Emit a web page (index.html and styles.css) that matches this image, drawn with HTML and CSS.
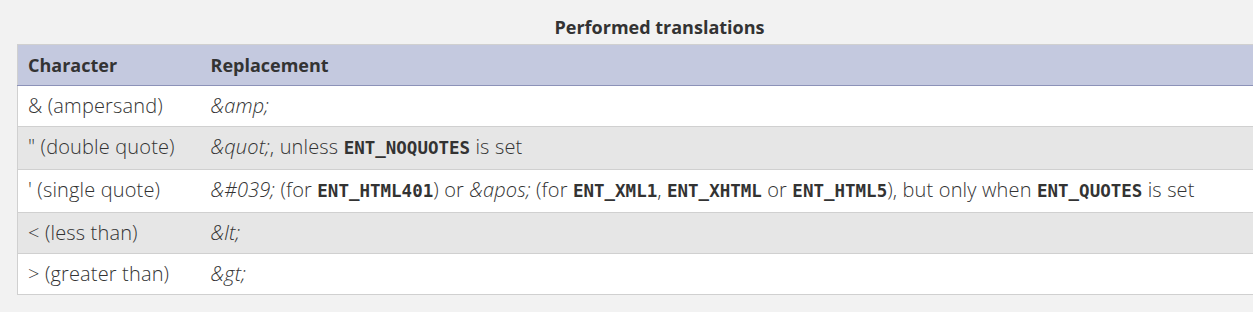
FILE: index.html
```html
<!DOCTYPE html>
<html>
<head>
<meta charset="utf-8">
<link rel="stylesheet" href="styles.css">
</head>
<body>
<div class="page">
<table class="doctable">
<caption>Performed translations</caption>
<colgroup><col class="c1"><col class="c2"></colgroup>
<thead>
<tr><th>Character</th><th>Replacement</th></tr>
</thead>
<tbody>
<tr><td>&amp; (ampersand)</td><td><em>&amp;amp;</em></td></tr>
<tr><td>" (double quote)</td><td><em>&amp;quot;</em>, unless <strong><code>ENT_NOQUOTES</code></strong> is set</td></tr>
<tr><td>' (single quote)</td><td><em>&amp;#039;</em> (for <strong><code>ENT_HTML401</code></strong>) or <em>&amp;apos;</em> (for <strong><code>ENT_XML1</code></strong>, <strong><code>ENT_XHTML</code></strong> or <strong><code>ENT_HTML5</code></strong>), but only when <strong><code>ENT_QUOTES</code></strong> is set</td></tr>
<tr><td>&lt; (less than)</td><td><em>&amp;lt;</em></td></tr>
<tr><td>&gt; (greater than)</td><td><em>&amp;gt;</em></td></tr>
</tbody>
</table>
</div>
</body>
</html>
```

FILE: styles.css
```css
html, body {
  margin: 0;
  padding: 0;
  background: #f2f2f2;
}
body {
  font-family: "Open Sans", sans-serif;
  font-size: 20px;
  line-height: 24px;
  color: #333;
  overflow: hidden;
}
.page {
  padding: 10px 0 0 17px;
  width: 1400px;
}
.doctable {
  width: 1285px;
  border-collapse: collapse;
  border: 1px solid #d0d0d0;
  background: #fff;
  table-layout: fixed;
}
.doctable caption {
  font-weight: bold;
  font-size: 18px;
  line-height: 24px;
  padding: 5px 0;
  text-align: center;
}
.c1 { width: 183px; }
.doctable th {
  background: #c4c9df;
  text-align: left;
  font-weight: bold;
  font-size: 18px;
  padding: 8px 10px;
  border-bottom: 1px solid #8c92b8;
}
.doctable td {
  padding: 8px 10px;
  border-bottom: 1px solid #d0d0d0;
  vertical-align: top;
  font-weight: 300;
  letter-spacing: 0.15px;
}
.doctable tbody tr:nth-child(even) td {
  background: #e6e6e6;
}
.doctable em {
  font-style: italic;
}
.doctable strong {
  font-weight: bold;
}
.doctable code {
  font-family: "DejaVu Sans Mono", monospace;
  font-size: 17.5px;
  letter-spacing: 0;
  line-height: 26px;
}
```
